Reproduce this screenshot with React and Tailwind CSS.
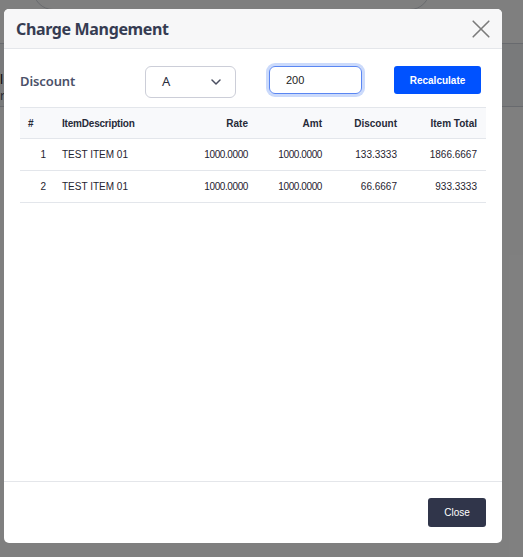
import React from 'react';

const rows = [
    { no: 1, desc: 'TEST ITEM 01', rate: '1000.0000', amt: '1000.0000', discount: '133.3333', total: '1866.6667' },
    { no: 2, desc: 'TEST ITEM 01', rate: '1000.0000', amt: '1000.0000', discount: '66.6667', total: '933.3333' },
];

export default function App() {
    return (
        <div className="relative w-full h-[557px] overflow-hidden bg-white" style={{ fontFamily: '"Noto Sans", sans-serif' }}>
            {/* page behind the overlay */}
            <div className="h-[44px] border-b border-gray-300 relative">
                <div className="absolute left-[33px] top-[-30px] w-[397px] h-[40px] rounded-full border border-gray-300"></div>
            </div>
            <div className="h-[63px] border-b border-gray-300 bg-gray-100 pl-0 pt-[28px] text-[12px] leading-[16px] text-black">
                <div>l</div>
                <div className="text-gray-600">r</div>
            </div>

            {/* overlay */}
            <div className="absolute inset-0 bg-black/50"></div>

            {/* modal */}
            <div className="absolute left-[4px] top-[9px] w-[498px] h-[534px] bg-white rounded-[5px] flex flex-col overflow-hidden">
                <div className="h-[40px] shrink-0 bg-[#f7f7f8] border-b border-[#e4e6ea] flex items-center justify-between pl-[12px] pr-[12px]">
                    <h2 className="text-[16px] font-bold text-[#363c52] tracking-[-0.35px]">Charge Mangement</h2>
                    <button className="text-[#7b7b7b]">
                        <svg width="18" height="18" viewBox="0 0 18 18" fill="none" stroke="currentColor" strokeWidth="1.6" strokeLinecap="round">
                            <path d="M1.2 1.2 L16.8 16.8 M16.8 1.2 L1.2 16.8" />
                        </svg>
                    </button>
                </div>

                <div className="flex-1 px-4 pt-[17px]">
                    <div className="flex items-start">
                        <div className="w-[125px] h-[32px] flex items-center text-[13px] font-semibold text-[#4b5169] tracking-[-0.1px]">Discount</div>
                        <div className="w-[91px] h-[32px] rounded-[6px] border border-[#ccced8] flex items-center justify-between pl-[16px] pr-[14px] text-[13px] text-[#2a2e3d]">
                            <span>A</span>
                            <svg width="10" height="6" viewBox="0 0 10 6" fill="none" stroke="#4a4f60" strokeWidth="1.5" strokeLinecap="round" strokeLinejoin="round">
                                <path d="M1 1 L5 5 L9 1" />
                            </svg>
                        </div>
                        <div className="ml-[33px] w-[93px] h-[28px] rounded-[6px] border border-[#5a86f2] ring-[3px] ring-[#cbdafb] flex items-center pl-[16px] text-[11px] text-[#222]" style={{ fontFamily: '"Liberation Sans", sans-serif' }}>200</div>
                        <button className="ml-[32px] w-[87px] h-[28px] rounded-[3px] bg-[#0052ff] text-white text-[10px] font-bold" style={{ fontFamily: '"Liberation Sans", sans-serif' }}>Recalculate</button>
                    </div>

                    <table className="mt-[9px] w-[466px] table-fixed border-collapse text-[10px] text-[#1f2330]" style={{ fontFamily: '"Liberation Sans", sans-serif' }}>
                        <colgroup>
                            <col className="w-[36px]" />
                            <col className="w-[124px]" />
                            <col className="w-[77px]" />
                            <col className="w-[74px]" />
                            <col className="w-[75px]" />
                            <col className="w-[80px]" />
                        </colgroup>
                        <thead>
                            <tr className="h-[31px] bg-[#f8f9fb] border-t border-b border-[#e3e6eb] text-[#262a38]">
                                <th className="text-left pl-[8px] font-bold">#</th>
                                <th className="text-left pl-[6px] font-bold tracking-[-0.2px]">ItemDescription</th>
                                <th className="text-right pr-[9px] font-bold">Rate</th>
                                <th className="text-right pr-[9px] font-bold">Amt</th>
                                <th className="text-right pr-[9px] font-bold">Discount</th>
                                <th className="text-right pr-[9px] font-bold">Item Total</th>
                            </tr>
                        </thead>
                        <tbody>
                            {rows.map(r => (
                                <tr key={r.no} className="h-[32px] border-b border-[#e3e6eb]">
                                    <td className="text-right pr-[10px]">{r.no}</td>
                                    <td className="text-left pl-[6px]">{r.desc}</td>
                                    <td className="text-right pr-[9px] tracking-[-0.4px]">{r.rate}</td>
                                    <td className="text-right pr-[9px] tracking-[-0.4px]">{r.amt}</td>
                                    <td className="text-right pr-[9px]">{r.discount}</td>
                                    <td className="text-right pr-[9px]">{r.total}</td>
                                </tr>
                            ))}
                        </tbody>
                    </table>
                </div>

                <div className="h-[62px] shrink-0 border-t border-[#e4e6ea] flex items-center justify-end pr-[16px]">
                    <button className="w-[58px] h-[29px] rounded-[3px] bg-[#30354a] text-white text-[10px]" style={{ fontFamily: '"Liberation Sans", sans-serif' }}>Close</button>
                </div>
            </div>
        </div>
    );
}
